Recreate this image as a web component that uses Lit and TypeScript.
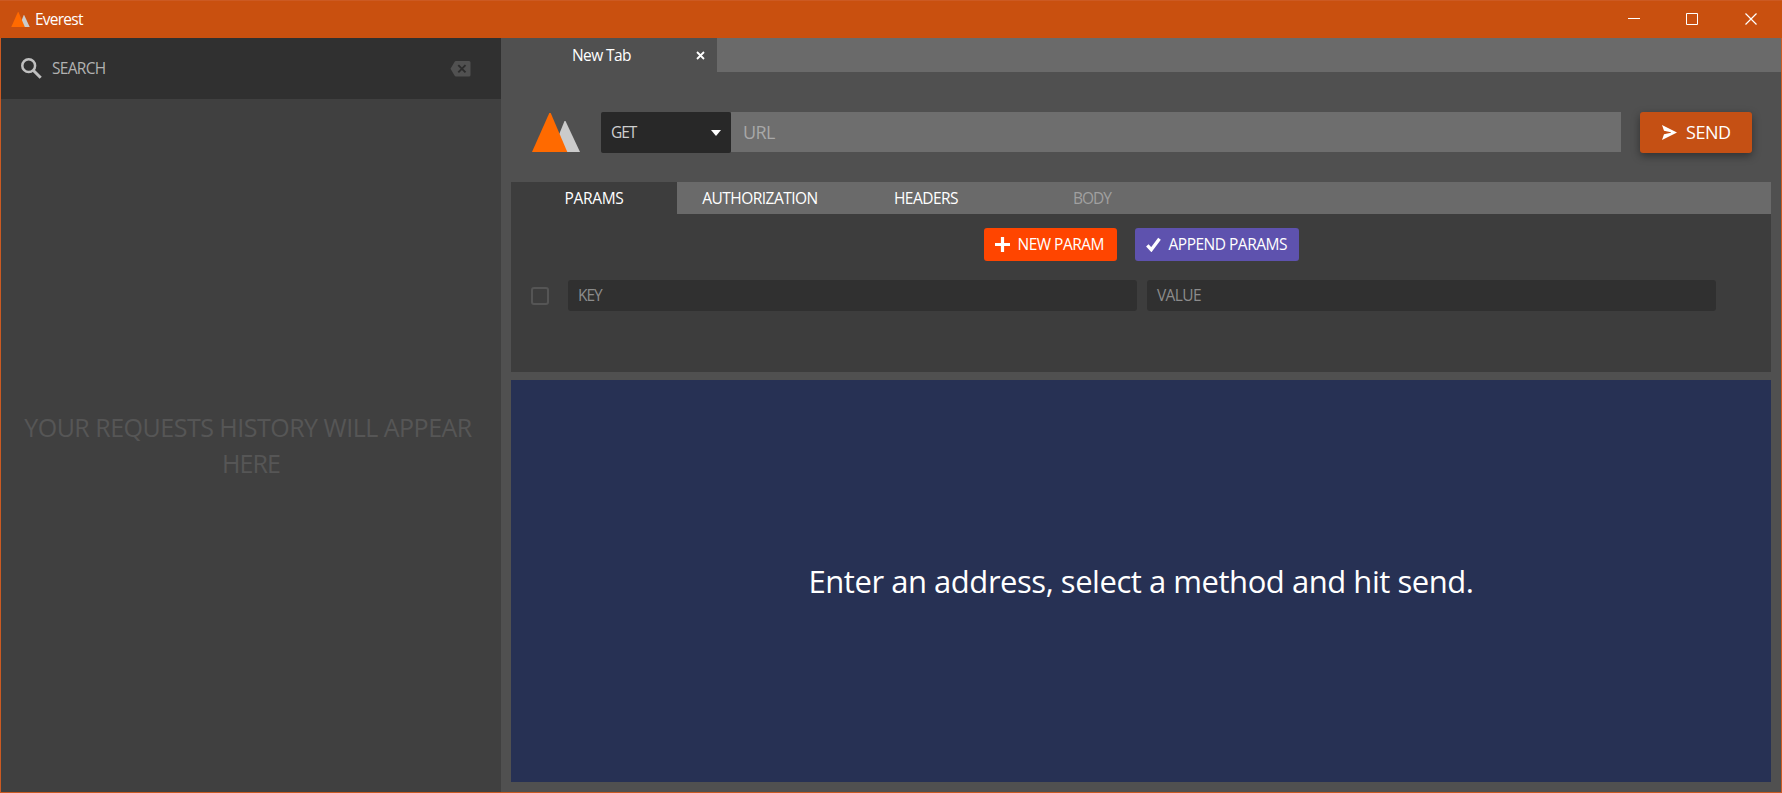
import { LitElement, html, css } from "lit";
import { customElement } from "lit/decorators.js";

const logo = html`<svg class="logo" viewBox="0 0 48 39">
  <path fill="#cbcbcb" d="M32.500 8h1L48 39H20z" />
  <path fill="#ff6a00" d="M17.300 0h1.400L35.300 39H0z" />
</svg>`;

@customElement("everest-titlebar")
class EverestTitlebar extends LitElement {
  static styles = css`
    :host { display: flex; align-items: center; height: 38px; box-sizing: border-box; padding: 0 24px 0 11px;
      border-top: 1px solid #cc5a22; background: #c9500f; color: #fff; font-size: 15.5px; letter-spacing: -0.76px; }
    .logo { width: 19px; height: 15px; margin: 0 5px 0 0; }
    .title { flex: 1; margin-top: -2px; }
    .controls { display: flex; gap: 45px; }
    .controls svg { width: 13px; height: 13px; fill: none; stroke: #fff; display: block; }
    .controls .close { margin-left: 1px; }
  `;
  render() {
    return html`
      ${logo}<span class="title">Everest</span>
      <div class="controls">
        <svg viewBox="0 0 13 13"><path d="M0 5.5h12" /></svg>
        <svg viewBox="0 0 13 13"><path d="M.5.5h11v11H.5z" /></svg>
        <svg class="close" viewBox="0 0 13 13"><path d="M.5.5l11 11M11.5.5l-11 11" stroke-width="1.2" /></svg>
      </div>`;
  }
}

@customElement("everest-history")
class EverestHistory extends LitElement {
  static styles = css`
    :host { display: flex; flex-direction: column; width: 500px; flex: none; background: #404040; }
    .search { display: flex; align-items: center; height: 61px; padding: 0 30px 0 20px; background: #303030; color: #b2b2b2;
      font-size: 15.5px; letter-spacing: -0.68px; }
    .glass { width: 21px; height: 21px; margin-right: 10px; }
    .label { flex: 1; margin-top: -2px; }
    .clear { width: 21px; height: 16px; margin-top: 1px; }
    .empty { flex: 1; display: flex; flex-direction: column; align-items: center; justify-content: center;
      font-size: 25px; line-height: 36px; letter-spacing: -0.5px; color: #565656; white-space: nowrap; padding: 0 6px 2px 0; }
    .last { letter-spacing: -0.95px; padding-left: 6px; }
  `;
  render() {
    return html`
      <div class="search">
        <svg class="glass" viewBox="0 0 21 21" fill="none" stroke="#c0c0c0">
          <circle cx="7.7" cy="7.7" r="6.4" stroke-width="2.5" />
          <path d="M12.2 12.2l7.5 7.5" stroke-width="3" />
        </svg>
        <span class="label">SEARCH</span>
        <svg class="clear" viewBox="0 0 21 16">
          <path fill="#515151" d="M6 0H19a1.5 1.5 0 0 1 1.5 1.5V14a1.5 1.5 0 0 1-1.5 1.5H6Q5 15.500 4.500 14.500L.5 7.800 4.500 1Q5 0 6 0z" />
          <path d="M8.300 4.200l7.200 7.200M15.500 4.200l-7.200 7.200" stroke="#2c2c2c" stroke-width="1.900" />
        </svg>
      </div>
      <div class="empty"><span>YOUR REQUESTS HISTORY WILL APPEAR</span><span class="last">HERE</span></div>`;
  }
}

@customElement("everest-request")
class EverestRequest extends LitElement {
  static styles = css`
    :host { display: flex; flex-direction: column; flex: 1; background: #505050; font-size: 15.5px; }
    .tabs { display: flex; height: 34px; background: #6a6a6a; }
    .tab { display: flex; align-items: center; width: 145px; padding: 0 0 0 71px; background: #505050; color: #fff;
      letter-spacing: -0.58px; }
    .tab span { flex: 1; }
    .tab svg { width: 9px; height: 9px; margin-right: 12px; }
    .address { display: flex; height: 41px; padding: 40px 29px 29px 31px; }
    .logo { width: 48px; height: 39px; margin: 1px 21px 0 0; }
    .method { display: flex; align-items: center; width: 130px; box-sizing: border-box; padding: 0 10px; background: #282828;
      color: #cfcfcf; border-radius: 2px; letter-spacing: -1.1px; }
    .method span { flex: 1; margin-top: -2px; }
    .method svg { width: 10px; height: 6px; }
    .url { flex: 1; height: 40px; line-height: 40px; padding-left: 12px; background: #6e6e6e; color: #a8a8a8;
      font-size: 18px; letter-spacing: -0.6px; }
    .send { display: flex; align-items: center; width: 112px; box-sizing: border-box; margin-left: 19px; padding-left: 22px;
      border-radius: 3px; background: #c55014; color: #fff; font-size: 18px; letter-spacing: -0.47px;
      box-shadow: 0 3px 9px rgba(0, 0, 0, 0.4); }
    .send svg { width: 15px; height: 15px; margin-right: 9px; }
    .send span, .action span { margin-top: -2px; }
    .panel { height: 190px; margin: 0 10px; background: #3d3d3d; }
    .sections { display: flex; height: 32px; background: #6a6a6a; color: #fff; letter-spacing: -0.53px; }
    .section { width: 166px; display: flex; align-items: center; justify-content: center; }
    .active { background: #3d3d3d; letter-spacing: -0.32px; }
    .disabled { color: #a0a0a0; letter-spacing: -1px; }
    .actions { display: flex; justify-content: center; gap: 18px; padding-top: 14px; height: 33px; }
    .action { display: flex; align-items: center; box-sizing: border-box; border-radius: 3px; color: #fff; letter-spacing: -0.5px; }
    .action svg { width: 15px; height: 15px; }
    .new { width: 133px; padding-left: 11px; gap: 8px; background: #ff4500; }
    .append { width: 164px; padding-left: 11px; gap: 8px; background: #5e52ae; }
    .row { display: flex; align-items: center; gap: 10px; padding: 19px 55px 0 20px; }
    .check { width: 18px; height: 18px; box-sizing: border-box; border: 2px solid #555; border-radius: 3px; margin: 1px 9px 0 0; }
    .field { flex: 1; height: 31px; line-height: 31px; padding-left: 10px; border-radius: 3px; background: #303030; color: #8c8c8c; }
    .key { letter-spacing: -1px; }
    .value { letter-spacing: -0.62px; }
    .response { flex: 1; display: flex; align-items: center; justify-content: center; margin: 8px 10px 10px;
      background: #273154; color: #fff; font-size: 31px; letter-spacing: -0.46px; }
  `;
  render() {
    return html`
      <div class="tabs"><div class="tab"><span>New Tab</span>
        <svg viewBox="0 0 9 9"><path d="M1 1l7 7M8 1l-7 7" stroke="#fff" stroke-width="1.8" /></svg></div></div>
      <div class="address">
        ${logo}
        <div class="method"><span>GET</span><svg viewBox="0 0 10 6"><path d="M0 0h10L5 6z" fill="#fff" /></svg></div>
        <div class="url">URL</div>
        <div class="send"><svg viewBox="0 0 15 15"><path fill="#fff" d="M0 0 15 7.500 0 15 2 9.200 9 7.800V7.200L2 5.800z" /></svg><span>SEND</span></div>
      </div>
      <div class="panel">
        <div class="sections">
          <div class="section active">PARAMS</div><div class="section">AUTHORIZATION</div>
          <div class="section">HEADERS</div><div class="section disabled">BODY</div>
        </div>
        <div class="actions">
          <div class="action new"><svg viewBox="0 0 15 15"><path d="M7.500 0v15M0 7.500h15" stroke="#fff" stroke-width="3.200" /></svg><span>NEW PARAM</span></div>
          <div class="action append"><svg viewBox="0 0 15 15"><path d="M1.300 8.300 5.300 12.700 13.500 1.700" fill="none" stroke="#fff" stroke-width="3.300" /></svg><span>APPEND PARAMS</span></div>
        </div>
        <div class="row"><span class="check"></span><div class="field key">KEY</div><div class="field value">VALUE</div></div>
      </div>
      <div class="response">Enter an address, select a method and hit send.</div>`;
  }
}

@customElement("app-root")
class AppRoot extends LitElement {
  static styles = css`
    :host { display: flex; flex-direction: column; height: 793px; overflow: hidden;
      font-family: "Open Sans", "Noto Sans", sans-serif; white-space: nowrap; }
    .body { display: flex; flex: 1; min-height: 0; border: 1px solid #cb5a22; border-top: 0; }
  `;
  render() {
    return html`<everest-titlebar></everest-titlebar>
      <div class="body"><everest-history></everest-history><everest-request></everest-request></div>`;
  }
}
